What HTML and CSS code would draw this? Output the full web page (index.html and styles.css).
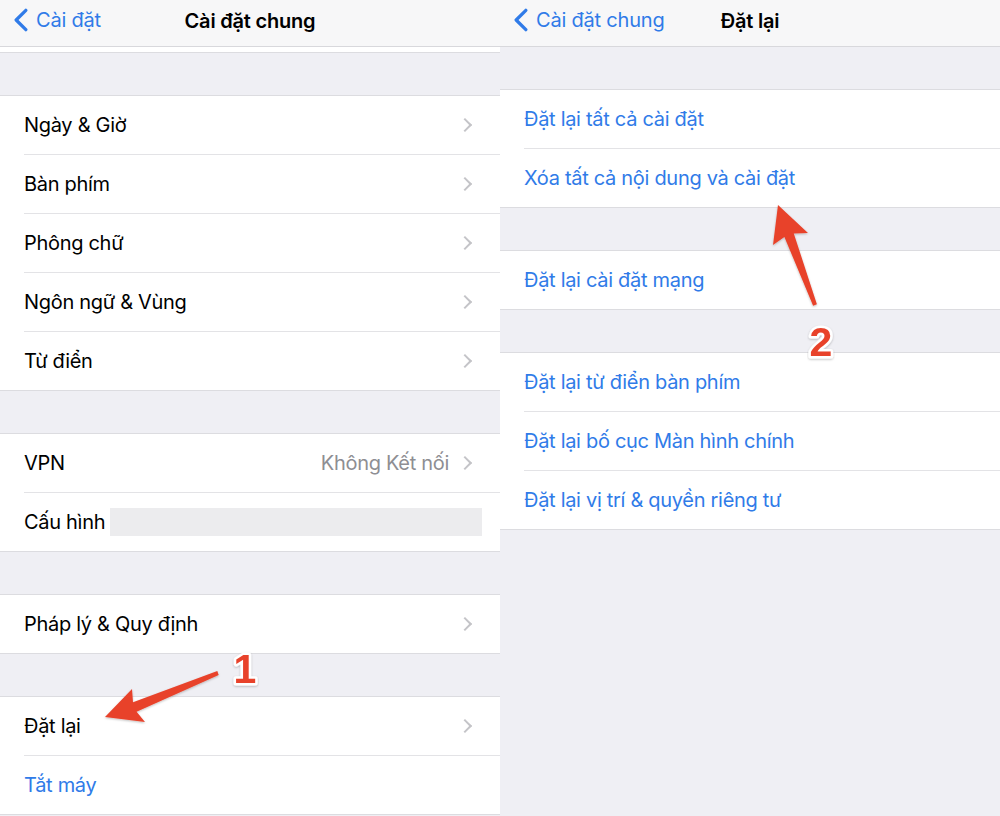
FILE: index.html
```html
<!DOCTYPE html>
<html lang="vi">
<head>
  <meta charset="UTF-8" />
  <title>Cài đặt chung - Đặt lại</title>
  <link rel="stylesheet" href="styles.css">
</head>
<body>
  <div class="screens">
    <!-- Màn hình 1: Cài đặt chung -->
    <section class="screen left">
      <header class="nav">
        <a class="back"><svg class="back-icon" viewBox="0 0 13 22"><path d="M11 2 L2 11 L11 20"/></svg>Cài đặt</a>
        <h1>Cài đặt chung</h1>
      </header>
      <div class="group stub"></div>

      <div class="group">
        <div class="row"><span>Ngày &amp; Giờ</span><i class="chev"></i></div>
        <div class="row"><span>Bàn phím</span><i class="chev"></i></div>
        <div class="row"><span>Phông chữ</span><i class="chev"></i></div>
        <div class="row"><span>Ngôn ngữ &amp; Vùng</span><i class="chev"></i></div>
        <div class="row"><span>Từ điển</span><i class="chev"></i></div>
      </div>

      <div class="group">
        <div class="row"><span>VPN</span><em class="value">Không Kết nối</em><i class="chev"></i></div>
        <div class="row"><span>Cấu hình</span><b class="hidden-box"></b></div>
      </div>

      <div class="group">
        <div class="row"><span>Pháp lý &amp; Quy định</span><i class="chev"></i></div>
      </div>

      <div class="group">
        <div class="row"><span>Đặt lại</span><i class="chev"></i></div>
        <div class="row link"><span>Tắt máy</span></div>
      </div>
    </section>

    <!-- Màn hình 2: Đặt lại -->
    <section class="screen right">
      <header class="nav">
        <a class="back"><svg class="back-icon" viewBox="0 0 13 22"><path d="M11 2 L2 11 L11 20"/></svg>Cài đặt chung</a>
        <h1>Đặt lại</h1>
      </header>

      <div class="group">
        <div class="row link"><span>Đặt lại tất cả cài đặt</span></div>
        <div class="row link"><span>Xóa tất cả nội dung và cài đặt</span></div>
      </div>

      <div class="group">
        <div class="row link"><span>Đặt lại cài đặt mạng</span></div>
      </div>

      <div class="group">
        <div class="row link"><span>Đặt lại từ điển bàn phím</span></div>
        <div class="row link"><span>Đặt lại bố cục Màn hình chính</span></div>
        <div class="row link"><span>Đặt lại vị trí &amp; quyền riêng tư</span></div>
      </div>
    </section>
  </div>

  <!-- mũi tên chú thích -->
  <svg class="marks" viewBox="0 0 1000 816" width="1000" height="816">
    <defs>
      <filter id="soft" x="-10%" y="-10%" width="120%" height="120%">
        <feDropShadow dx="0" dy="1" stdDeviation="1" flood-color="#000" flood-opacity="0.25"/>
      </filter>
    </defs>
    <polygon class="arrow" filter="url(#soft)" points="105,717 132,689 133,702.3 217.3,671.1 218.7,674.9 136.6,711.7 145,722"/>
    <polygon class="arrow" filter="url(#soft)" points="778,205 808,233 793.8,233.5 816.9,304.3 813.1,305.7 784.4,237 773,245"/>
    <text class="num" x="245" y="683" filter="url(#soft)">1</text>
    <text class="num" x="821" y="356" filter="url(#soft)">2</text>
  </svg>
</body>
</html>
```

FILE: styles.css
```css
* { margin: 0; padding: 0; box-sizing: border-box; }

body {
  background: #efeff4;
  font-family: Inter, "Noto Sans", sans-serif;
  color: #000;
  width: 1000px;
  height: 816px;
  overflow: hidden;
  position: relative;
}

.screens {
  display: flex;
  height: 816px;
}

.screen {
  width: 500px;
  background: #efeff4;
}

.nav {
  height: 47px;
  background: #f7f7f8;
  border-bottom: 1px solid #d8d8dc;
  position: relative;
  display: flex;
  align-items: center;
  justify-content: center;
  padding-bottom: 5px;
}

.nav h1 {
  font-size: 20px;
  font-weight: 600;
  letter-spacing: -0.2px;
}

.back {
  position: absolute;
  left: 14px;
  top: 8px;
  display: flex;
  align-items: center;
  gap: 8px;
  color: #307be8;
  font-size: 20px;
  letter-spacing: -0.2px;
}

.back-icon {
  width: 14px;
  height: 24px;
  fill: none;
  stroke: #307be8;
  stroke-width: 3;
  stroke-linecap: round;
  stroke-linejoin: round;
}

.group {
  background: #fff;
  border-top: 1px solid #dcdce0;
  border-bottom: 1px solid #dcdce0;
  margin-top: 42px;
}

.group.stub {
  height: 6px;
  border-top: 0;
  margin-top: 0;
}

.row {
  height: 59px;
  margin-left: 24px;
  padding-right: 28px;
  display: flex;
  align-items: center;
  font-size: 20px;
  letter-spacing: -0.3px;
  border-bottom: 1px solid #e3e3e6;
}

.row:last-child {
  border-bottom: 0;
  height: 58px;
}

.row span { flex: none; }

.row.link { color: #307be8; }

.value {
  margin-left: auto;
  font-style: normal;
  color: #8e8e93;
  margin-right: 11px;
}

.chev {
  margin-left: auto;
  width: 10px;
  height: 10px;
  border-top: 2px solid #c4c4c8;
  border-right: 2px solid #c4c4c8;
  transform: rotate(45deg);
  margin-right: 2px;
}

.value + .chev { margin-left: 0; }

.hidden-box {
  display: block;
  margin-left: 5px;
  margin-right: -10px;
  flex: 1;
  height: 28px;
  background: #ececee;
}

.marks {
  position: absolute;
  left: 0;
  top: 0;
  pointer-events: none;
}

.arrow { fill: #e8432c; }

.num {
  font-family: "Liberation Sans", Arial, sans-serif;
  font-weight: bold;
  font-size: 41px;
  fill: #e8432c;
  stroke: #fff;
  stroke-width: 5px;
  stroke-linejoin: round;
  paint-order: stroke;
  text-anchor: middle;
}
```
